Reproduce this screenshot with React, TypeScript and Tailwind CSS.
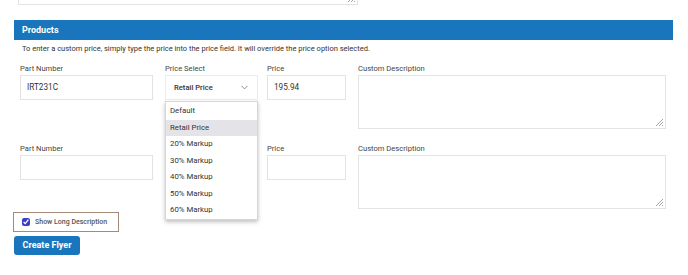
// App.tsx
import { ChevronDown } from "lucide-react";

const priceOptions = [
    "Default",
    "Retail Price",
    "20% Markup",
    "30% Markup",
    "40% Markup",
    "50% Markup",
    "60% Markup",
];

const Grip = () => (
    <svg width="8" height="8" viewBox="0 0 8 8" className="absolute right-[2px] bottom-[2px]">
        <path d="M8 1 L1 8 M8 4 L4 8 M8 7 L7 8" stroke="#9a9a9a" strokeWidth="0.9" />
    </svg>
);

const Label = ({ text }: { text: string }) => (
    <label className="block h-[12px] text-[7.6px] leading-[12px] text-[#444]">{text}</label>
);

const ProductRow = ({
                        partNumber,
                        price,
                        withSelect,
                    }: {
    partNumber: string;
    price: string;
    withSelect: boolean;
}) => (
    <div className="flex pl-[20px]">
        <div className="w-[133px]">
            <Label text="Part Number" />
            <div className="h-[25px] border border-[#e3e3e3] pl-[6px] text-[8.2px] leading-[23px] text-[#333]">
                {partNumber}
            </div>
        </div>
        <div className="w-[93px] ml-[12px] relative">
            {withSelect && (
                <>
                    <Label text="Price Select" />
                    <div className="h-[25px] border border-[#ececec] flex items-center justify-between pl-[8px] pr-[7px] text-[7.6px] text-[#333] font-medium">
                        <span>Retail Price</span>
                        <ChevronDown size={11} strokeWidth={1.6} className="text-[#666]" />
                    </div>
                    <div className="absolute left-0 top-[38px] w-[93px] bg-white border border-[#d6d6d6] shadow-[0_2px_4px_rgba(0,0,0,0.25)] pt-[1px] z-10">
                        {priceOptions.map((opt) => (
                            <div
                                key={opt}
                                className={
                                    "h-[16.5px] leading-[16.5px] pl-[4px] text-[7.8px] text-[#333] " +
                                    (opt === "Retail Price" ? "bg-[#e3e3e8]" : "")
                                }
                            >
                                {opt}
                            </div>
                        ))}
                    </div>
                </>
            )}
        </div>
        <div className="w-[79px] ml-[9px]">
            <Label text="Price" />
            <div className="h-[25px] border border-[#e3e3e3] pl-[6px] text-[8.2px] leading-[23px] text-[#333]">
                {price}
            </div>
        </div>
        <div className="w-[308px] ml-[12px]">
            <Label text="Custom Description" />
            <div className="relative h-[54px] border border-[#e3e3e3]">
                <Grip />
            </div>
        </div>
    </div>
);

export default function App() {
    return (
        <div className="font-['Roboto',sans-serif] w-[688px] h-[275px] bg-white overflow-hidden relative">
            <div className="relative ml-[18px] w-[340px] h-[5px] border-x border-b border-[#e3e3e3]">
                <Grip />
            </div>

            <div className="mt-[15px] ml-[14px] w-[659px] h-[20px] bg-[#1a76bc] pl-[8px] text-white font-bold text-[9px] leading-[20px]">
                Products
            </div>
            <p className="pl-[22px] mt-[2px] text-[7.5px] leading-[13px] text-[#333]">
                To enter a custom price, simply type the price into the price field. It will override the price option selected.
            </p>

            <div className="mt-[8px]">
                <ProductRow partNumber="IRT231C" price="195.94" withSelect />
            </div>
            <div className="mt-[14px]">
                <ProductRow partNumber="" price="" withSelect={false} />
            </div>

            <div className="ml-[13px] mt-[3px] w-[106px] h-[20px] border-[1.5px] border-[#a58a78] flex items-center pl-[8px] gap-[5px]">
                <input type="checkbox" checked readOnly className="w-[8px] h-[8px] m-0 accent-[#3b3fc8]" />
                <span className="text-[7px] font-medium text-[#555]">Show Long Description</span>
            </div>

            <button className="block ml-[14px] mt-[4px] w-[66px] h-[19px] rounded-[3px] bg-[#1a76bc] text-white font-bold text-[9px] leading-[19px]">
                Create Flyer
            </button>
        </div>
    );
}
